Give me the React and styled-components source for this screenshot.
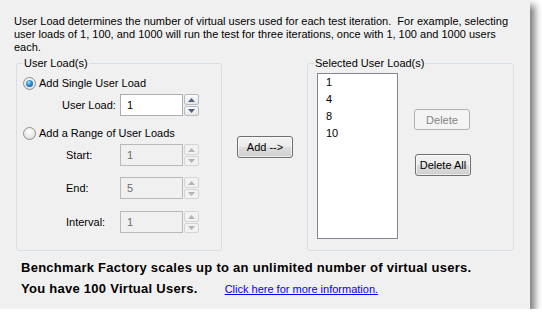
import React from 'react';
import styled, { createGlobalStyle } from 'styled-components';

const FONT = '"Liberation Sans", Arial, sans-serif';

const Global = createGlobalStyle`
  html, body { margin: 0; padding: 0; background: #ffffff; }
  body { font-family: ${FONT}; font-size: 11px; }
`;

const Window = styled.div`
  width: 530px;
  height: 309px;
  box-sizing: border-box;
  background: #f0f0f0;
  box-shadow: 5px 5px 7px rgba(0, 0, 0, 0.5);
  padding: 15px 0 0 14px;
  display: flex;
  flex-direction: column;
  color: #000;
  font-family: ${FONT};
  font-size: 11px;
`;

const Intro = styled.p`
  margin: 0;
  width: 505px;
  line-height: 13px;
`;

const Middle = styled.div`
  display: flex;
  align-items: flex-start;
  margin: 3px 0 0 2px;
`;

const Group = styled.fieldset`
  box-sizing: border-box;
  width: ${(p) => p.$w}px;
  height: 194px;
  margin: 0;
  padding: 0 0 0 ${(p) => p.$pl}px;
  border: 1px solid #d5dfe5;
  border-radius: 3px;
  min-width: 0;
`;

const Legend = styled.legend`
  padding: 0 1px;
  margin-left: ${(p) => p.$shift}px;
  line-height: 13px;
  font-size: 11px;
`;

const RadioRow = styled.label`
  display: flex;
  align-items: center;
  height: 14px;
  margin-top: ${(p) => p.$top}px;
  gap: 3px;
`;

const Radio = styled.span`
  width: 13px;
  height: 13px;
  box-sizing: border-box;
  border-radius: 50%;
  border: 1px solid #8f8f8f;
  background: radial-gradient(circle at 50% 35%, #ffffff 0%, #e8e8e8 60%, #cfcfcf 100%);
  display: inline-flex;
  align-items: center;
  justify-content: center;
  flex: none;

  &::after {
    content: '';
    display: ${(p) => (p.$checked ? 'block' : 'none')};
    width: 7px;
    height: 7px;
    border-radius: 50%;
    background: radial-gradient(circle at 40% 35%, #9fe0fb 0%, #2a8ccb 45%, #0b4a7e 100%);
  }
`;

const FieldRow = styled.div`
  display: flex;
  align-items: center;
  height: 22px;
  margin-top: ${(p) => p.$top}px;
`;

const FieldLabel = styled.span`
  box-sizing: border-box;
  width: 97px;
  padding-left: ${(p) => p.$indent}px;
  color: #000;
`;

const TextBox = styled.div`
  box-sizing: border-box;
  width: 63px;
  height: 22px;
  padding-left: 6px;
  display: flex;
  align-items: center;
  border: 1px solid ${(p) => (p.$disabled ? '#b9b9b9' : '#abadb3')};
  background: ${(p) => (p.$disabled ? '#f0f0f0' : '#ffffff')};
  color: ${(p) => (p.$disabled ? '#6d6d6d' : '#000')};
`;

const Spin = styled.div`
  display: flex;
  flex-direction: column;
  gap: 1px;
  margin-left: 1px;
  height: 22px;
`;

const SpinBtn = styled.div`
  box-sizing: border-box;
  width: 15px;
  height: ${(p) => p.$h}px;
  border: 1px solid ${(p) => (p.$disabled ? '#d4d4d4' : '#b5bac2')};
  border-radius: 2px;
  background: ${(p) =>
    p.$disabled ? '#f2f2f2' : 'linear-gradient(#fbfbfb, #e6e6e6)'};
  display: flex;
  align-items: center;
  justify-content: center;
`;

const Arrow = ({ down, disabled }) => (
  <svg width="7" height="4" viewBox="0 0 7 4">
    <path
      d={down ? 'M0 0 L7 0 L3.5 4 Z' : 'M0 4 L7 4 L3.5 0 Z'}
      fill={disabled ? '#b4b4b4' : '#4d6185'}
    />
  </svg>
);

const Spinner = ({ disabled }) => (
  <Spin>
    <SpinBtn $h={11} $disabled={disabled}>
      <Arrow disabled={disabled} />
    </SpinBtn>
    <SpinBtn $h={10} $disabled={disabled}>
      <Arrow down disabled={disabled} />
    </SpinBtn>
  </Spin>
);

const Field = ({ label, value, indent, top, disabled }) => (
  <FieldRow $top={top}>
    <FieldLabel $indent={indent}>{label}</FieldLabel>
    <TextBox $disabled={disabled}>{value}</TextBox>
    <Spinner disabled={disabled} />
  </FieldRow>
);

const Button = styled.button`
  box-sizing: border-box;
  width: 56px;
  height: ${(p) => p.$h}px;
  margin: ${(p) => p.$m};
  padding: 0;
  font-family: ${FONT};
  font-size: 11px;
  color: #000;
  border: 1px solid #707070;
  border-radius: 3px;
  background: linear-gradient(#f2f2f2 0%, #ebebeb 48%, #dddddd 52%, #cfcfcf 100%);
  box-shadow: inset 0 0 0 1px rgba(255, 255, 255, 0.6);
  flex: none;

  &:disabled {
    border-color: #adb2b5;
    background: #f4f4f4;
    color: #838383;
    box-shadow: none;
  }
`;

const ListBox = styled.ul`
  box-sizing: border-box;
  width: 81px;
  height: 166px;
  margin: 3px 0 0 0;
  padding: 0;
  list-style: none;
  background: #ffffff;
  border: 1px solid #828790;
`;

const ListItem = styled.li`
  height: 17px;
  line-height: 17px;
  padding-left: 8px;
`;

const GroupBody = styled.div`
  display: flex;
  align-items: flex-start;
`;

const ButtonCol = styled.div`
  display: flex;
  flex-direction: column;
  margin-left: 16px;
`;

const Footer = styled.div`
  margin: 6px 0 0 7px;
  line-height: 21px;
`;

const Bold = styled.div`
  font-family: ${FONT};
  font-weight: bold;
  font-size: 13px;
  letter-spacing: 0.27px;
  display: flex;
  align-items: baseline;
`;

const Link = styled.a`
  font-weight: normal;
  font-size: 11px;
  letter-spacing: 0;
  color: #0000ff;
  text-decoration: underline;
  margin-left: 27px;
  cursor: pointer;
`;

export default function App() {
  return (
    <>
      <Global />
      <Window>
        <Intro>
          User Load determines the number of virtual users used for each test iteration.&nbsp; For
          example, selecting user loads of 1, 100, and 1000 will run the test for three iterations,
          once with 1, 100 and 1000 users each.
        </Intro>
        <Middle>
          <Group $w={206} $pl={6}>
            <Legend $shift={0}>User Load(s)</Legend>
            <RadioRow $top={6}>
              <Radio $checked />
              Add Single User Load
            </RadioRow>
            <Field label="User Load:" value="1" indent={39} top={4} />
            <RadioRow $top={10}>
              <Radio />
              Add a Range of User Loads
            </RadioRow>
            <Field label="Start:" value="1" indent={43} top={4} disabled />
            <Field label="End:" value="5" indent={43} top={11} disabled />
            <Field label="Interval:" value="1" indent={43} top={12} disabled />
          </Group>
          <Button $h={22} $m="79px 14px 0 15px">Add --&gt;</Button>
          <Group $w={207} $pl={9}>
            <Legend $shift={-3}>Selected User Load(s)</Legend>
            <GroupBody>
              <ListBox>
                <ListItem>1</ListItem>
                <ListItem>4</ListItem>
                <ListItem>8</ListItem>
                <ListItem>10</ListItem>
              </ListBox>
              <ButtonCol>
                <Button $h={21} $m="39px 0 0 0" disabled>
                  Delete
                </Button>
                <Button $h={22} $m="24px 0 0 1px">
                  Delete All
                </Button>
              </ButtonCol>
            </GroupBody>
          </Group>
        </Middle>
        <Footer>
          <Bold>Benchmark Factory scales up to an unlimited number of virtual users.</Bold>
          <Bold>
            You have 100 Virtual Users.
            <Link>Click here for more information.</Link>
          </Bold>
        </Footer>
      </Window>
    </>
  );
}
